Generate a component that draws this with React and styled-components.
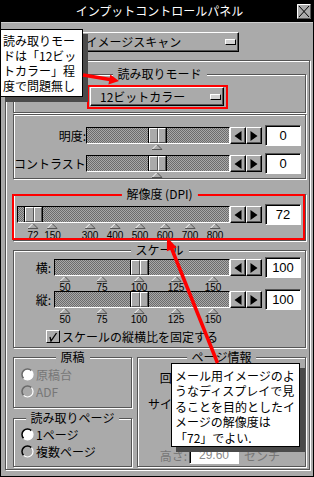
import React from "react";
import styled, { createGlobalStyle, css } from "styled-components";

const FACE = "#aaaaaa";
const SHADE = "#555555";
const DIS = "#777777";
const JP = `"Noto Sans CJK JP", "Noto Sans", sans-serif`;
const LAT = `"Liberation Sans", Arial, sans-serif`;

const GlobalStyle = createGlobalStyle`
  html, body { margin: 0; padding: 0; background: ${FACE}; overflow: hidden; }
  *, *::before, *::after { box-sizing: border-box; }
  body { font-family: ${JP}; font-size: 12px; color: #000; }
  button { font: inherit; color: inherit; }
`;

const Window = styled.div`
  position: relative;
  width: 314px;
  height: 477px;
  background: ${FACE};
  border: 1px solid #000;
  border-top: 0;
  display: flex;
  flex-direction: column;
  overflow: hidden;
`;

const TitleBar = styled.header`
  flex: none;
  height: 23px;
  background: #000;
  border-bottom: 1px solid #cfcfcf;
  display: grid;
  grid-template-columns: 1fr auto 1fr;
  align-items: center;
  padding: 0 2px 0 7px;
`;

const Title = styled.h1`
  margin: 0;
  color: #fff;
  font-size: 12px;
  font-weight: normal;
  line-height: 22px;
  white-space: nowrap;
`;

const CloseBox = styled.button`
  justify-self: end;
  width: 14px;
  height: 15px;
  padding: 0;
  border: 0;
  background: none;
  display: block;
  svg { display: block; }
`;

const TopArea = styled.div`
  flex: none;
  height: 37px;
  display: flex;
  justify-content: center;
  align-items: flex-start;
  padding-top: 9px;
`;

const Popup = styled.button`
  width: ${(p) => p.$w}px;
  height: ${(p) => p.$h}px;
  display: flex;
  align-items: center;
  justify-content: space-between;
  padding: 0 2px 0 9px;
  background: ${FACE};
  border: 1px solid;
  border-color: #fff #000 #000 #fff;
  box-shadow: inset -1px -1px 0 ${SHADE};
  font-size: 12px;
  line-height: 14px;
  white-space: nowrap;
`;

const PopupMark = styled.span`
  width: 11px;
  height: 6px;
  background: #d2d2d2;
  border: 1px solid;
  border-color: #fff #000 #000 #fff;
`;

const Frame = styled.div`
  flex: none;
  height: 410px;
  margin: 0 3px 6px 4px;
  border: 1px solid ${SHADE};
  box-shadow: inset 1px 1px 0 #fff, 1px 1px 0 #fff;
  padding: 0 3px 0 7px;
  display: flex;
  flex-direction: column;
`;

const Group = styled.section`
  position: relative;
  flex: none;
  margin-top: ${(p) => p.$mt || 0}px;
  height: ${(p) => p.$h}px;
  border: 1px solid ${SHADE};
  box-shadow: inset 1px 1px 0 #fff, 1px 1px 0 #fff;
  padding: ${(p) => p.$pad || "0"};
  ${(p) =>
    p.$flag &&
    css`
      &::before {
        content: "";
        position: absolute;
        left: -2px;
        right: 0;
        top: -1px;
        bottom: 0;
        border: 2px solid #ff0000;
        z-index: 1;
        pointer-events: none;
      }
    `}
`;

const Legend = styled.h2`
  position: absolute;
  top: -8px;
  left: 50%;
  transform: translateX(-50%);
  margin: 0;
  padding: 0 5px;
  background: ${FACE};
  font-size: 12px;
  font-weight: normal;
  line-height: 14px;
  white-space: nowrap;
  z-index: 2;
`;

const RedFrame = styled.div`
  display: inline-block;
  border: 2px solid #ff0000;
  padding: 0 2px 1px 1px;
  line-height: 0;
`;

const SliderStack = styled.div`
  display: flex;
  flex-direction: column;
  gap: ${(p) => p.$gap}px;
`;

const SliderGrid = styled.div`
  display: grid;
  grid-template-columns: ${(p) => p.$labelW}px 1fr 32px 39px;
  grid-template-rows: 17px auto;
  align-items: start;
`;

const SliderLabel = styled.span`
  text-align: right;
  padding-right: ${(p) => p.$pad}px;
  line-height: 17px;
  white-space: nowrap;
`;

const Track = styled.div`
  position: relative;
  height: 17px;
  border: 1px solid;
  border-color: #000 #fff #fff #000;
  background-color: #8a8a8a;
  background-image: conic-gradient(#6c6c6c 25%, #a8a8a8 0 50%, #6c6c6c 0 75%, #a8a8a8 0);
  background-size: 2px 2px;
`;

const Thumb = styled.div`
  position: absolute;
  top: 0;
  bottom: 0;
  width: 19px;
  display: flex;
  border-left: 1px solid #000;
  border-right: 1px solid #000;
`;

const ThumbHalf = styled.span`
  flex: 1;
  background: ${FACE};
  border: 1px solid;
  border-color: #fff ${SHADE} ${SHADE} #fff;
`;

const ArrowPair = styled.div`
  display: flex;
`;

const ArrowBtn = styled.button`
  width: 16px;
  height: 17px;
  padding: 0;
  background: ${FACE};
  border: 1px solid;
  border-color: #fff #000 #000 #fff;
  box-shadow: inset -1px -1px 0 ${SHADE};
  display: grid;
  place-items: center;
  svg { display: block; }
`;

const ValueBox = styled.div`
  width: 36px;
  height: 21px;
  margin: -2px 0 0 3px;
  background: #fff;
  border: 1px solid;
  border-color: ${SHADE} #fff #fff ${SHADE};
  box-shadow: inset 1px 1px 0 #000;
  font-family: ${LAT};
  font-size: 13px;
  line-height: 19px;
  text-align: center;
`;

const TickRow = styled.div`
  grid-column: 2;
  position: relative;
  height: ${(p) => p.$h}px;
`;

const Tick = styled.div`
  position: absolute;
  top: 0;
  transform: translateX(-50%);
  display: flex;
  flex-direction: column;
  align-items: center;
  svg { display: block; }
`;

const TickLabel = styled.span`
  margin-top: ${(p) => p.$gap}px;
  font-family: ${LAT};
  font-size: 10px;
  line-height: 10px;
`;

const CheckRow = styled.label`
  display: flex;
  align-items: center;
  gap: 2px;
  margin-top: 7px;
  margin-left: 32px;
  height: 13px;
  line-height: 13px;
  white-space: nowrap;
`;

const CheckBox = styled.span`
  width: 14px;
  height: 13px;
  background: ${FACE};
  border: 1px solid;
  border-color: #fff #000 #000 #fff;
  display: grid;
  place-items: center;
  svg { display: block; }
`;

const BottomRow = styled.div`
  flex: none;
  margin-top: 9px;
  height: 110px;
  display: grid;
  grid-template-columns: 119px 1fr;
  column-gap: 5px;
`;

const Column = styled.div`
  display: flex;
  flex-direction: column;
`;

const RadioList = styled.div`
  display: flex;
  flex-direction: column;
  gap: 4px;
  padding-left: 7px;
`;

const RadioRow = styled.label`
  display: flex;
  align-items: center;
  gap: 2px;
  height: 13px;
  line-height: 13px;
  color: ${(p) => (p.$disabled ? DIS : "#000")};
  svg { display: block; flex: none; }
`;

const InfoList = styled.div`
  display: flex;
  flex-direction: column;
  gap: 6px;
`;

const InfoRow = styled.div`
  display: grid;
  grid-template-columns: 50px auto auto;
  justify-content: start;
  align-items: center;
  height: 20px;
  color: ${(p) => (p.$disabled ? DIS : "#000")};
`;

const InfoLabel = styled.span`
  text-align: right;
  padding-right: 1px;
  white-space: nowrap;
`;

const Field = styled.div`
  width: 50px;
  height: 17px;
  margin-left: 1px;
  background: #fff;
  border: 1px solid;
  border-color: ${SHADE} #fff #fff ${SHADE};
  box-shadow: inset 1px 1px 0 #000;
  font-family: ${LAT};
  font-size: 12px;
  line-height: 15px;
  text-align: center;
  color: ${(p) => (p.$disabled ? "#8a8a8a" : "#000")};
`;

const Unit = styled.span`
  margin-left: 5px;
  white-space: nowrap;
`;

const Callout = styled.div`
  position: absolute;
  left: ${(p) => p.$x}px;
  top: ${(p) => p.$y}px;
  width: ${(p) => p.$w}px;
  height: ${(p) => p.$h}px;
  background: #fff;
  border: 1px solid #000;
  box-shadow: 5px 5px 0 #4a4a4a;
  padding: ${(p) => p.$pt}px 0 0 ${(p) => p.$pl}px;
  font-size: 12px;
  line-height: ${(p) => p.$lh}px;
  white-space: nowrap;
  z-index: 5;
`;

const Line = styled.div``;

const Overlay = styled.svg`
  position: absolute;
  left: -1px;
  top: 0;
  width: 314px;
  height: 477px;
  pointer-events: none;
  z-index: 6;
`;

function Tri({ dir }) {
  return (
    <svg width="8" height="10" viewBox="0 0 8 10">
      {dir === "left" ? (
        <polygon points="7.5,0 7.5,10 0.5,5" fill="#000" />
      ) : (
        <polygon points="0.5,0 0.5,10 7.5,5" fill="#000" />
      )}
    </svg>
  );
}

function TickMark() {
  return (
    <svg width="11" height="6" viewBox="0 0 11 6">
      <polygon points="0.5,5.5 5.5,0.5 10.5,5.5" fill={FACE} />
      <path d="M0.5 5.5 L5.5 0.5" stroke="#fff" strokeWidth="1" fill="none" />
      <path d="M5.5 0.5 L10.5 5.5 L0.5 5.5" stroke={SHADE} strokeWidth="1" fill="none" />
    </svg>
  );
}

function Slider({ label, labelW, labelPad = 0, pos, value, display, ticks, tickH, labelGap, showLabels }) {
  const x = pos(value);
  return (
    <SliderGrid $labelW={labelW}>
      <SliderLabel $pad={labelPad}>{label}</SliderLabel>
      <Track>
        <Thumb style={{ left: Math.round(x - 1 - 9.5) }}>
          <ThumbHalf />
          <ThumbHalf />
        </Thumb>
      </Track>
      <ArrowPair>
        <ArrowBtn aria-label="減らす">
          <Tri dir="left" />
        </ArrowBtn>
        <ArrowBtn aria-label="増やす">
          <Tri dir="right" />
        </ArrowBtn>
      </ArrowPair>
      <ValueBox>{display}</ValueBox>
      <TickRow $h={tickH}>
        {ticks.map((t) => (
          <Tick key={t} style={{ left: pos(t) }}>
            <TickMark />
            {showLabels && <TickLabel $gap={labelGap}>{t}</TickLabel>}
          </Tick>
        ))}
      </TickRow>
    </SliderGrid>
  );
}

function Radio({ on, disabled }) {
  const dark = disabled ? "#6a6a6a" : "#000";
  return (
    <svg width="13" height="13" viewBox="0 0 13 13">
      <circle cx="6.5" cy="6.5" r="5.5" fill={on ? "#fff" : FACE} />
      <path d="M10.4 2.6 A5.5 5.5 0 0 0 2.6 10.4" stroke={dark} strokeWidth="1.5" fill="none" />
      <path d="M2.6 10.4 A5.5 5.5 0 0 0 10.4 2.6" stroke="#fff" strokeWidth="1.2" fill="none" />
    </svg>
  );
}

const brightPos = (v) => 71 + v * 0.6;
const dpiPos = (v) => 16 + (v - 72) * 0.25;
const scalePos = (v) => 11 + (v - 50) * 1.48;

export default function App() {
  return (
    <>
      <GlobalStyle />
      <Window>
        <TitleBar>
          <span />
          <Title>インプットコントロールパネル</Title>
          <CloseBox aria-label="閉じる">
            <svg width="14" height="15" viewBox="0 0 14 15">
              <rect x="0" y="0" width="14" height="15" fill={FACE} />
              <path d="M0.5 14.5 V0.5 H13.5" stroke="#fff" fill="none" />
              <path d="M13.5 0.5 V14.5 H0.5" stroke={SHADE} fill="none" />
              <path d="M2 2 L12 13 M12 2 L2 13" stroke="#000" strokeWidth="1" />
            </svg>
          </CloseBox>
        </TitleBar>

        <TopArea>
          <Popup $w={163} $h={20}>
            <span>イメージスキャン</span>
            <PopupMark />
          </Popup>
        </TopArea>

        <Frame>
          <Group $mt={13} $h={39} $pad="10px 0 0 73px">
            <Legend>読み取りモード</Legend>
            <RedFrame>
              <Popup $w={134} $h={19}>
                <span>12ビットカラー</span>
                <PopupMark />
              </Popup>
            </RedFrame>
          </Group>

          <Group $mt={1} $h={65} $pad="12px 4px 0 0">
            <SliderStack $gap={5}>
              <Slider label="明度:" labelW={72} pos={brightPos} value={0} display="0" ticks={[0]} tickH={6} />
              <Slider label="コントラスト:" labelW={72} pos={brightPos} value={0} display="0" ticks={[0]} tickH={6} />
            </SliderStack>
          </Group>

          <Group $mt={15} $h={47} $pad="11px 4px 0 0" $flag>
            <Legend>解像度 (DPI)</Legend>
            <Slider
              label=""
              labelW={3}
              pos={dpiPos}
              value={72}
              display="72"
              ticks={[72, 150, 300, 400, 500, 600, 700, 800]}
              tickH={17}
              labelGap={2}
              showLabels
            />
          </Group>

          <Group $mt={9} $h={98} $pad="8px 4px 0 0">
            <Legend>スケール</Legend>
            <Slider
              label="横:"
              labelW={40}
              labelPad={3}
              pos={scalePos}
              value={100}
              display="100"
              ticks={[50, 75, 100, 125, 150]}
              tickH={15}
              labelGap={1}
              showLabels
            />
            <Slider
              label="縦:"
              labelW={40}
              labelPad={3}
              pos={scalePos}
              value={100}
              display="100"
              ticks={[50, 75, 100, 125, 150]}
              tickH={15}
              labelGap={1}
              showLabels
            />
            <CheckRow>
              <CheckBox>
                <svg width="10" height="10" viewBox="0 0 10 10">
                  <path d="M2 5 L3 9 L8.5 1" stroke="#000" strokeWidth="1.3" fill="none" />
                </svg>
              </CheckBox>
              スケールの縦横比を固定する
            </CheckRow>
          </Group>

          <BottomRow>
            <Column>
              <Group $h={51} $pad="10px 0 0 0">
                <Legend>原稿</Legend>
                <RadioList>
                  <RadioRow $disabled>
                    <Radio on disabled />
                    原稿台
                  </RadioRow>
                  <RadioRow $disabled>
                    <Radio disabled />
                    ADF
                  </RadioRow>
                </RadioList>
              </Group>
              <Group $mt={10} $h={49} $pad="9px 0 0 0">
                <Legend>読み取りページ</Legend>
                <RadioList>
                  <RadioRow>
                    <Radio on />
                    1ページ
                  </RadioRow>
                  <RadioRow>
                    <Radio />
                    複数ページ
                  </RadioRow>
                </RadioList>
              </Group>
            </Column>
            <Group $h={110} $pad="9px 0 0 0">
              <Legend>ページ情報</Legend>
              <InfoList>
                <InfoRow>
                  <InfoLabel>回転:</InfoLabel>
                </InfoRow>
                <InfoRow>
                  <InfoLabel>サイズ:</InfoLabel>
                </InfoRow>
                <InfoRow $disabled />
                <InfoRow $disabled>
                  <InfoLabel>高さ:</InfoLabel>
                  <Field $disabled>29.60</Field>
                  <Unit>センチ</Unit>
                </InfoRow>
              </InfoList>
            </Group>
          </BottomRow>
        </Frame>

        <Callout $x={-1} $y={29} $w={83} $h={68} $pt={3} $pl={2} $lh={15}>
          <Line>読み取りモー</Line>
          <Line>ドは「12ビッ</Line>
          <Line>トカラー」程</Line>
          <Line>度で問題無し</Line>
        </Callout>

        <Callout $x={170} $y={363} $w={129} $h={84} $pt={4} $pl={3} $lh={15.4}>
          <Line>メール用イメージのよ</Line>
          <Line>うなディスプレイで見</Line>
          <Line>ることを目的としたイ</Line>
          <Line>メージの解像度は</Line>
          <Line>「72」でよい.</Line>
        </Callout>

        <Overlay viewBox="0 0 314 477">
          <line x1="83" y1="75" x2="110" y2="79.5" stroke="#ff0000" strokeWidth="3.5" />
          <polygon points="119,81 108.4,84.5 110.3,74.5" fill="#ff0000" />
          <line x1="217.5" y1="363" x2="171" y2="247" stroke="#ff0000" strokeWidth="3.5" />
          <polygon points="167,237 176.6,247.5 166.9,251.2" fill="#ff0000" />
        </Overlay>
      </Window>
    </>
  );
}
